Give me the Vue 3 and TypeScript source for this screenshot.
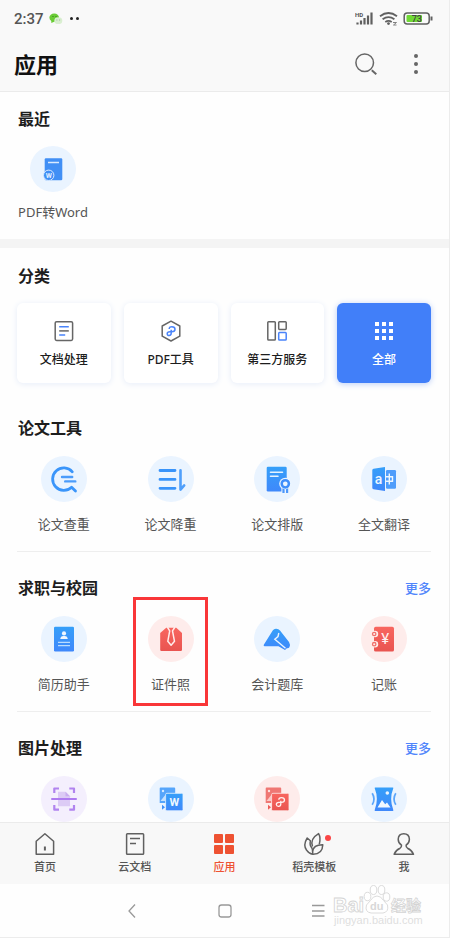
<script setup lang="ts">
interface AppItem {
  name: string
  icon: string
  tone: 'blue' | 'red' | 'purple'
  marked?: boolean
}

interface Section {
  title: string
  more: boolean
  captions: boolean
  items: AppItem[]
}

const categories = [
  { name: '文档处理', icon: 'doc', active: false },
  { name: 'PDF工具', icon: 'pdf', active: false },
  { name: '第三方服务', icon: 'third', active: false },
  { name: '全部', icon: 'all', active: true },
]

const sections: Section[] = [
  {
    title: '论文工具',
    more: false,
    captions: true,
    items: [
      { name: '论文查重', icon: 'check', tone: 'blue' },
      { name: '论文降重', icon: 'reduce', tone: 'blue' },
      { name: '论文排版', icon: 'layout', tone: 'blue' },
      { name: '全文翻译', icon: 'translate', tone: 'blue' },
    ],
  },
  {
    title: '求职与校园',
    more: true,
    captions: true,
    items: [
      { name: '简历助手', icon: 'resume', tone: 'blue' },
      { name: '证件照', icon: 'photo', tone: 'red', marked: true },
      { name: '会计题库', icon: 'account', tone: 'blue' },
      { name: '记账', icon: 'ledger', tone: 'red' },
    ],
  },
  {
    title: '图片处理',
    more: true,
    captions: false,
    items: [
      { name: '扫描', icon: 'scan', tone: 'purple' },
      { name: '图片转Word', icon: 'imgWord', tone: 'blue' },
      { name: '图片转PDF', icon: 'imgPdf', tone: 'red' },
      { name: '图片', icon: 'picture', tone: 'blue' },
    ],
  },
]

const tabs = [
  { name: '首页', icon: 'home', active: false, dot: false },
  { name: '云文档', icon: 'cloud', active: false, dot: false },
  { name: '应用', icon: 'apps', active: true, dot: false },
  { name: '稻壳模板', icon: 'leaf', active: false, dot: true },
  { name: '我', icon: 'me', active: false, dot: false },
]

const letter = 'font-family="Roboto, sans-serif" text-anchor="middle"'

// Round launcher icons, drawn on a 46 x 46 grid
const appIcons: Record<string, string> = {
  word: `<rect x="14.7" y="12.3" width="17.6" height="22" rx="1.2" fill="#418ff5"/>
    <path d="M18 16.5H29" stroke="#d9eaff" stroke-width="1.3"/>
    <circle cx="18.7" cy="29.3" r="5.2" fill="#418ff5" stroke="#d9eaff" stroke-width="1"/>
    <text x="18.7" y="31.8" font-size="7" font-weight="700" fill="#e4f0ff" ${letter}>W</text>`,
  check: `<g fill="none" stroke="#3a95fa" stroke-linecap="round" stroke-linejoin="round">
    <path d="M31.3 15.8A11.2 11.2 0 1 0 30.6 31.2L34.5 35" stroke-width="2.8"/></g>
    <path d="M21 21H31.2M24.2 25.4H34.3" stroke="#4b9cfb" stroke-width="2.4" stroke-linecap="round"/>`,
  reduce: `<path d="M12 14.5H27M12 23.4H27M12 32.3H27" stroke="#3994fa" stroke-width="2.8" stroke-linecap="round"/>
    <path d="M32.5 14.2V33.6L36.2 29.4" fill="none" stroke="#4f9ffb" stroke-width="2.6" stroke-linecap="round" stroke-linejoin="round"/>`,
  layout: `<rect x="12.7" y="10.8" width="20" height="24.8" rx="1.3" fill="url(#blue)"/>
    <path d="M16.5 16.3H28.5M16.5 20.3H24" stroke="#e6f3ff" stroke-width="1.6" stroke-linecap="round"/>
    <path d="M27.4 29H35.2V38H27.4Z" fill="#ebf5ff"/>
    <circle cx="31.3" cy="27.8" r="6.1" fill="#ebf5ff"/>
    <circle cx="31.3" cy="27.8" r="3.6" fill="#ebf5ff" stroke="#3f8efb" stroke-width="2.5"/>
    <path d="M28.4 32.3V37H30.6V33.2ZM34.2 32.3V37H32V33.2Z" fill="#4c97fb"/>`,
  translate: `<rect x="25" y="14" width="10" height="18.7" rx="1.2" fill="#4f9dfb"/>
    <path d="M12.5 12.8L24 10.9V35.1L12.5 33.2Q11.3 33 11.3 32V14Q11.3 13 12.5 12.8Z" fill="url(#blue)"/>
    <text x="17.4" y="27.8" font-size="14" font-weight="500" fill="#eef7ff" ${letter}>a</text>
    <path d="M25 20.8H31.5V25.2H25M28.3 17.5V28.5" fill="none" stroke="#eef7ff" stroke-width="1.4"/>`,
  resume: `<rect x="13" y="10.7" width="20" height="24.7" rx="1.2" fill="url(#blue)"/>
    <circle cx="23" cy="17.4" r="2.1" fill="#eef7ff"/>
    <path d="M19.2 23Q19.4 20.3 22 20.1H24Q26.6 20.3 26.8 23Z" fill="#eef7ff"/>
    <path d="M17 26.4H29M17 29.7H29" stroke="#b9dcff" stroke-width="1.3"/>`,
  photo: `<path d="M12.2 17L18.2 11.8H28.3L34 17V33.8Q34 35 32.8 35H13.4Q12.2 35 12.2 33.8Z" fill="url(#red)"/>
    <path d="M19.3 11L21.7 14.8L19.8 25.3L23.1 29.2L26.5 25.3L24.5 14.8L27 11" fill="none" stroke="#ffeceb" stroke-width="1.5" stroke-linejoin="round"/>`,
  account: `<path d="M9.8 28.8L18.7 14.4Q20 12.6 22.3 12.8Q24.6 13 26 14.4L35 26Q36.8 29 35.4 31.2Q34.5 32.6 32.8 32.2L31 34L24.5 30.2H10.5Q9.2 30 9.8 28.8Z" fill="url(#blue)"/>
    <path d="M24.8 17L24 20.5L20.8 23.3L31.5 32.3" fill="none" stroke="#e8f4ff" stroke-width="1.4"/>`,
  ledger: `<rect x="13" y="10.8" width="20" height="24.8" rx="1.7" fill="url(#red)"/>
    <g fill="#feeceb"><circle cx="14" cy="18" r="3.2"/><circle cx="14" cy="28.2" r="3.2"/></g>
    <g fill="#feeceb" stroke="#f0716c" stroke-width="1.3"><circle cx="13.2" cy="18" r="1.7"/><circle cx="13.2" cy="28.2" r="1.7"/></g>
    <text x="24.1" y="28.4" font-size="15" fill="#fff0ef" ${letter}>¥</text>`,
  scan: `<path d="M17 15.8H24.5L29 20.3V30.3H17Z" fill="#dccbf5"/><path d="M24.5 15.8V20.3H29Z" fill="#c9adef"/>
    <path d="M13.3 17V12.5H18M28.3 12.5H33V17M33 29V33.7H28.3M18 33.7H13.3V29" fill="none" stroke="#b184ef" stroke-width="2.2" stroke-linejoin="round"/>
    <path d="M11 23H35" stroke="#ae7bf0" stroke-width="2" stroke-linecap="round"/>`,
  imgWord: `<path d="M12.5 11.4H26.2Q27.2 11.4 27.2 12.4V18H18V27H11.7V12.4Q11.7 11.4 12.5 11.4Z" fill="#55a5fb"/>
    <circle cx="15" cy="15" r="1.2" fill="#d4eaff"/><path d="M12.5 25L17.2 19V25Z" fill="#c5e1fe"/>
    <path d="M14 28.8L17 31.2L14 33.8Z" fill="#3f90f8"/>
    <rect x="17.6" y="17.3" width="17.4" height="17.5" rx="1.3" fill="url(#blue)" stroke="#eaf5ff" stroke-width=".8"/>
    <text x="26.2" y="30.2" font-size="11" font-weight="700" fill="#eef7ff" ${letter}>W</text>`,
  imgPdf: `<path d="M12.5 11.4H26.2Q27.2 11.4 27.2 12.4V18H18V27H11.7V12.4Q11.7 11.4 12.5 11.4Z" fill="#ef7773"/>
    <circle cx="15" cy="15" r="1.2" fill="#ffe1df"/><path d="M12.5 25L17.2 19V25Z" fill="#fbc9c7"/>
    <path d="M14 28.8L17 31.2L14 33.8Z" fill="#ed5c57"/>
    <rect x="17.6" y="17.3" width="17.4" height="17.5" rx="1.3" fill="url(#red)" stroke="#ffefee" stroke-width=".8"/>
    <path d="M24.8 23.8Q24.8 21.6 27.4 21.6Q30.5 21.6 30.5 24Q30.5 26.3 27.4 26.3H24.8Q22.3 26.5 22.3 28.5Q22.5 30.5 24.6 30.4Q26.8 30.2 26.8 28V24.8" fill="none" stroke="#ffefee" stroke-width="1.3"/>`,
  picture: `<path d="M14.2 11.4H31.8Q32.6 11.4 32.3 12.3Q28 23 32.3 34Q32.6 34.9 31.8 34.9H14.2Q13.4 34.9 13.7 34Q18 23 13.7 12.3Q13.4 11.4 14.2 11.4Z" fill="url(#blue)"/>
    <path d="M16.5 31.5L21 24L24.2 28.2L26 26.5L29.5 31.5Z" fill="#f0f8ff"/><circle cx="26.3" cy="17" r="1.8" fill="#eaf5ff"/>
    <path d="M11.2 17.2Q14.8 23 11.2 28.8M34.8 17.2Q31.2 23 34.8 28.8" fill="none" stroke="#5aa5fa" stroke-width="1.7"/>`,
}

// Category glyphs, drawn on a 24 x 24 grid
const cardIcons: Record<string, string> = {
  doc: `<rect x="3.2" y="2.7" width="17.4" height="18.8" rx="1.4" stroke="#666"/>
    <path d="M7.2 7.7H16.8M7.2 16.1H13.2" stroke="#4a84fa"/><path d="M7.2 11.9H16.8" stroke="#666"/>`,
  pdf: `<path d="M12 2.2L20.8 7V17.2L12 22L3.2 17.2V7Z" stroke="#666" stroke-linejoin="round"/>
    <path d="M10.3 10V9Q10.5 7.7 12.8 7.7Q16 7.7 16 10.2Q16 12.7 12.8 12.7H11Q8.2 12.8 8.2 14.7Q8.4 16.7 10.2 16.5Q12.2 16.3 12.2 14.3V10.7" stroke="#4a84fa"/>`,
  third: `<rect x="2.8" y="2.7" width="7.5" height="18.4" rx=".8" stroke="#666"/><rect x="13.7" y="2.7" width="7.5" height="7.7" rx=".8" stroke="#666"/>
    <rect x="13.7" y="13.6" width="7.5" height="7.5" rx=".8" stroke="#4a84fa"/>`,
  all: `<g fill="#fff" stroke="none"><rect x="3" y="3" width="4" height="4"/><rect x="10" y="3" width="4" height="4"/><rect x="17" y="3" width="4" height="4"/>
    <rect x="3" y="10" width="4" height="4"/><rect x="10" y="10" width="4" height="4"/><rect x="17" y="10" width="4" height="4"/>
    <rect x="3" y="17" width="4" height="4"/><rect x="10" y="17" width="4" height="4"/><rect x="17" y="17" width="4" height="4"/></g>`,
}

// Tab bar glyphs, drawn on a 24 x 24 grid
const tabIcons: Record<string, string> = {
  home: `<path d="M3.2 9.3L11.9 1.8L20.6 9.3V22.2H3.2Z" stroke-linejoin="round"/><path d="M11.9 14.5V18.5" stroke-width="2"/>`,
  cloud: `<rect x="3.6" y="1.7" width="17" height="20.5" rx=".8"/><path d="M7 6.6H17M7 11.4H13"/>`,
  apps: `<g fill="#ee5232" stroke="none"><rect x="2" y="2" width="9" height="9" rx="1"/><rect x="13" y="2" width="9" height="9" rx="1"/>
    <rect x="2" y="13" width="9" height="9" rx="1"/><rect x="13" y="13" width="9" height="9" rx="1"/></g>`,
  leaf: `<path d="M10.5 14.5Q7.8 6.8 16.6 1.6Q19 5.5 17.3 12.3" stroke-linejoin="round"/>
    <path d="M8.4 8.8L5.2 6Q.7 13.2 4.6 18.2Q7 21.9 10.5 22.2Q11.4 17.2 8.5 13.8Q7.8 11.5 8.4 8.8Z" stroke-linejoin="round"/>
    <path d="M10.5 22.2Q20.5 22.5 20.8 12.8Q11.5 12.6 10.5 19.5" stroke-linejoin="round"/>`,
  me: `<path d="M9.5 13.2Q6.2 10.8 6.2 7.2Q6.4 1.7 11.8 1.7Q17.2 1.7 17.4 7.2Q17.4 10.8 14.1 13.2Q13.8 15.2 15.5 16.2Q19.7 18 21.5 22.2H2.1Q3.9 18 8.1 16.2Q9.8 15.2 9.5 13.2Z" stroke-linejoin="round"/>`,
}
</script>

<template>
  <div class="screen">
    <svg class="defs" aria-hidden="true">
      <defs>
        <linearGradient id="blue" x1="0" y1="0" x2="0" y2="1">
          <stop offset="0" stop-color="#359ff9" />
          <stop offset="1" stop-color="#3f88fb" />
        </linearGradient>
        <linearGradient id="red" x1="0" y1="0" x2="0" y2="1">
          <stop offset="0" stop-color="#f8665f" />
          <stop offset="1" stop-color="#e95450" />
        </linearGradient>
      </defs>
    </svg>

    <header class="top">
      <div class="status">
        <span class="time">2:37</span>
        <svg class="wechat" viewBox="0 0 14 12" aria-hidden="true">
          <path d="M5.2 .5C8 .5 10 2.3 10 4.6S8 8.7 5.2 8.7L2.3 10V8Q.4 6.8 .4 4.6C.4 2.3 2.5 .5 5.2 .5Z" fill="#69cc35" />
          <ellipse cx="9.3" cy="7.7" rx="4" ry="3.4" fill="#d9efd0" />
          <path d="M3.5 3.5h1M6.5 3.5h1" stroke="#34771a" />
          <path d="M7.5 7h.8M10.3 7h.8" stroke="#8fa887" />
        </svg>
        <span class="dots"><i></i><i></i></span>
        <svg class="signal" viewBox="0 0 78 16" aria-hidden="true">
          <text x="0" y="5.5" font-size="6" font-weight="700" font-family="Roboto, sans-serif" fill="#555">HD</text>
          <path d="M2.5 13.5V11.5M6 13.5V9.5M9.5 13.5V7M13 13.5V4.5M16.5 13.5V1.5" stroke="#606060" stroke-width="2.2" />
          <g fill="none" stroke="#606060" stroke-width="1.8">
            <path d="M25 5.2Q33.5-1.2 42 5.2M27.6 8.3Q33.5 3.8 39.4 8.3M30.3 11Q33.5 8.8 36.7 11" />
          </g>
          <circle cx="33.5" cy="12.6" r="1.4" fill="#606060" />
          <path d="M38 11.5h3.5l-3 2.5h3" fill="none" stroke="#808080" stroke-width="1" />
          <rect x="49.2" y="2" width="25" height="11" rx="3" fill="#fafafa" stroke="#606060" stroke-width="1.5" />
          <rect x="51.5" y="4" width="15.5" height="7" rx="1" fill="#70d935" />
          <path d="M76.5 5.5V9.5" stroke="#606060" stroke-width="2" />
          <text x="61.8" y="10.7" font-size="9" font-weight="500" font-family="Roboto, sans-serif" text-anchor="middle" fill="#444">73</text>
        </svg>
      </div>
      <div class="bar">
        <h1>应用</h1>
        <button class="tool" type="button" aria-label="搜索">
          <svg viewBox="0 0 24 24"><circle cx="10.7" cy="10.7" r="8.8" /><path d="M17.8 18.3L22.3 22.3" stroke-width="2" /></svg>
        </button>
        <button class="tool" type="button" aria-label="更多选项">
          <svg viewBox="0 0 24 24"><g class="solid"><circle cx="12" cy="4" r="2" /><circle cx="12" cy="12" r="2" /><circle cx="12" cy="20" r="2" /></g></svg>
        </button>
      </div>
    </header>

    <main class="content">
      <section class="recent">
        <h2>最近</h2>
        <button class="app" type="button">
          <svg class="disc blue" viewBox="0 0 46 46" aria-hidden="true" v-html="appIcons.word"></svg>
          <span>PDF转Word</span>
        </button>
      </section>

      <section class="categories">
        <h2>分类</h2>
        <div class="grid">
          <button v-for="c in categories" :key="c.name" type="button" class="card" :class="{ active: c.active }">
            <svg viewBox="0 0 24 24" aria-hidden="true" v-html="cardIcons[c.icon]"></svg>
            <span>{{ c.name }}</span>
          </button>
        </div>
      </section>

      <section v-for="s in sections" :key="s.title" class="group">
        <div class="heading">
          <h2>{{ s.title }}</h2>
          <a v-if="s.more" href="#">更多</a>
        </div>
        <div class="grid">
          <button
            v-for="item in s.items"
            :key="item.name"
            type="button"
            class="app"
            :class="{ marked: item.marked }"
            :aria-label="item.name"
          >
            <svg class="disc" :class="item.tone" viewBox="0 0 46 46" aria-hidden="true" v-html="appIcons[item.icon]"></svg>
            <span v-if="s.captions">{{ item.name }}</span>
          </button>
        </div>
      </section>
    </main>

    <nav class="tabs">
      <a v-for="t in tabs" :key="t.name" href="#" :class="{ active: t.active }">
        <span class="glyph">
          <svg viewBox="0 0 24 24" aria-hidden="true" v-html="tabIcons[t.icon]"></svg>
          <i v-if="t.dot" class="badge"></i>
        </span>
        <span>{{ t.name }}</span>
      </a>
    </nav>

    <footer class="system">
      <button type="button" aria-label="返回"><svg viewBox="0 0 20 20"><path d="M13 3.5L7 10L13 16.5" /></svg></button>
      <button type="button" aria-label="主屏幕"><svg viewBox="0 0 20 20"><rect x="4" y="4" width="12" height="12" rx="2.5" /></svg></button>
      <button type="button" aria-label="任务"><svg viewBox="0 0 20 20"><path d="M4 4.5H16.5M4 10H16.5M4 15H16.5" /></svg></button>
      <div class="watermark" aria-hidden="true">
        <svg viewBox="0 0 90 44">
          <g fill="#fff" stroke="#dcdcdc" stroke-width="1">
            <ellipse cx="34.5" cy="12.5" rx="3.3" ry="4.2" />
            <ellipse cx="40.5" cy="6" rx="3.3" ry="4.5" />
            <ellipse cx="48.5" cy="6" rx="3.3" ry="4.5" />
            <ellipse cx="53.5" cy="13" rx="3.3" ry="4.2" />
            <path d="M44 12Q48 12 50.5 16.5L54.5 21Q56 28 50 29H38Q31.5 28 33.5 21L37.5 16.5Q40 12 44 12Z" />
          </g>
          <g fill="#fff" stroke="#d4d4d4" stroke-width=".8" font-weight="700">
            <text x="0" y="28" font-size="20" font-family="Liberation Sans, sans-serif">Bai</text>
            <text x="58" y="27" font-size="15" font-family="Noto Sans CJK SC, sans-serif">经验</text>
          </g>
          <text x="37" y="26" font-size="11" font-weight="700" fill="#d8d8d8" font-family="Liberation Sans, sans-serif">du</text>
          <text x="1" y="40" font-size="11" fill="#dedede" font-family="Liberation Sans, sans-serif">jingyan.baidu.com</text>
        </svg>
      </div>
    </footer>
  </div>
</template>

<style>
body {
  margin: 0;
}
</style>

<style scoped>
.screen {
  box-sizing: border-box;
  display: flex;
  flex-direction: column;
  height: 100vh;
  overflow: hidden;
  border-right: 1px solid #ececec;
  border-bottom: 1px solid #ececec;
  background: #fefefe;
  color: #1d1d1d;
  font-family: "Noto Sans", "Noto Sans CJK SC", sans-serif;
}

.defs {
  position: absolute;
  width: 0;
  height: 0;
}

button {
  padding: 0;
  border: 0;
  background: none;
  color: inherit;
  font: inherit;
  cursor: pointer;
}

a {
  color: inherit;
  text-decoration: none;
}

h1,
h2 {
  margin: 0;
  font-weight: 700;
}

h2 {
  padding-left: 1px;
  font-size: 16px;
  line-height: 24px;
}

.top {
  border-bottom: 1px solid #ebebeb;
  background: #f9f9f9;
}

.status {
  display: flex;
  align-items: center;
  height: 37px;
  padding: 0 16px 0 14px;
}

.time {
  color: #555;
  font-family: Roboto, sans-serif;
  font-size: 15px;
  font-weight: 500;
}

.wechat {
  width: 14px;
  height: 12px;
  margin-left: 5px;
}

.dots {
  display: flex;
  gap: 3px;
  margin-left: 7px;
}

.dots i {
  width: 3px;
  height: 3px;
  border-radius: 50%;
  background: #222;
}

.signal {
  width: 78px;
  height: 16px;
  margin-left: auto;
}

.bar {
  display: flex;
  align-items: center;
  gap: 26px;
  height: 54px;
  padding: 0 21px 0 14px;
}

h1 {
  flex: 1;
  color: #111;
  font-size: 22px;
  line-height: 32px;
}

.tool,
.tool svg {
  display: block;
  width: 24px;
  height: 24px;
}

.tool svg {
  fill: none;
  stroke: #666;
  stroke-width: 1.5;
}

.tool .solid {
  fill: #666;
  stroke: none;
}

.content {
  flex: 1;
  min-height: 0;
  overflow: hidden;
}

.recent {
  padding: 15px 18px 17px 17px;
  border-bottom: 9px solid #f4f4f4;
}

.recent .app {
  gap: 10px;
  min-width: 72px;
  margin-top: 15px;
}

.categories {
  padding: 16px 18px 9px 17px;
}

.grid {
  display: grid;
  grid-template-columns: repeat(4, 1fr);
  gap: 13px;
}

.categories .grid {
  margin-top: 15px;
}

.card {
  display: flex;
  flex-direction: column;
  align-items: center;
  gap: 8px;
  box-sizing: border-box;
  height: 80px;
  padding-top: 16px;
  border-radius: 6px;
  background: #fff;
  box-shadow: 0 1px 6px #e6edf9;
  font-size: 12px;
  font-weight: 500;
  line-height: 18px;
}

.card svg {
  width: 24px;
  height: 24px;
  fill: none;
  stroke-width: 1.5;
}

.card.active {
  background: #417ff9;
  box-shadow: 0 1px 6px #b9cdf7;
  color: #fff;
}

.group {
  margin: 0 18px 0 17px;
  padding: 24px 0 17px;
  border-bottom: 1px solid #eee;
}

.heading {
  display: flex;
  align-items: center;
  justify-content: space-between;
  margin-bottom: 16px;
}

.heading a {
  color: #5085fb;
  font-size: 13px;
  font-weight: 500;
  line-height: 20px;
}

.app {
  position: relative;
  display: flex;
  flex-direction: column;
  align-items: center;
  gap: 12px;
  color: #555;
  font-size: 13px;
  line-height: 20px;
}

.disc {
  width: 46px;
  height: 46px;
  border-radius: 50%;
}

.blue {
  background: #eaf4ff;
}

.red {
  background: #feeceb;
}

.purple {
  background: #f4effd;
}

.marked::after {
  content: "";
  position: absolute;
  inset: -19px 10px -12px 9px;
  border: 3px solid #f93638;
}

.tabs {
  display: grid;
  grid-template-columns: repeat(5, 1fr);
  height: 61px;
  border-top: 1px solid #ebebeb;
  background: #f8f8f8;
}

.tabs a {
  display: flex;
  flex-direction: column;
  align-items: center;
  gap: 3px;
  padding-top: 9px;
  color: #555;
  font-size: 11px;
  font-weight: 500;
  line-height: 16px;
}

.tabs a.active {
  color: #ee5232;
}

.glyph {
  position: relative;
  height: 24px;
}

.glyph svg {
  width: 24px;
  height: 24px;
  fill: none;
  stroke: #606060;
  stroke-width: 1.5;
}

.badge {
  position: absolute;
  top: 3px;
  right: -5px;
  width: 6px;
  height: 6px;
  border-radius: 50%;
  background: #fa4646;
}

.system {
  position: relative;
  display: flex;
  align-items: center;
  justify-content: center;
  gap: 73px;
  height: 53px;
}

.system button,
.system button svg {
  display: block;
  width: 20px;
  height: 20px;
}

.system button svg {
  fill: none;
  stroke: #999;
  stroke-width: 1.3;
}

.watermark {
  position: absolute;
  top: 0;
  right: 26px;
}

.watermark svg {
  display: block;
  width: 90px;
  height: 44px;
}
</style>
